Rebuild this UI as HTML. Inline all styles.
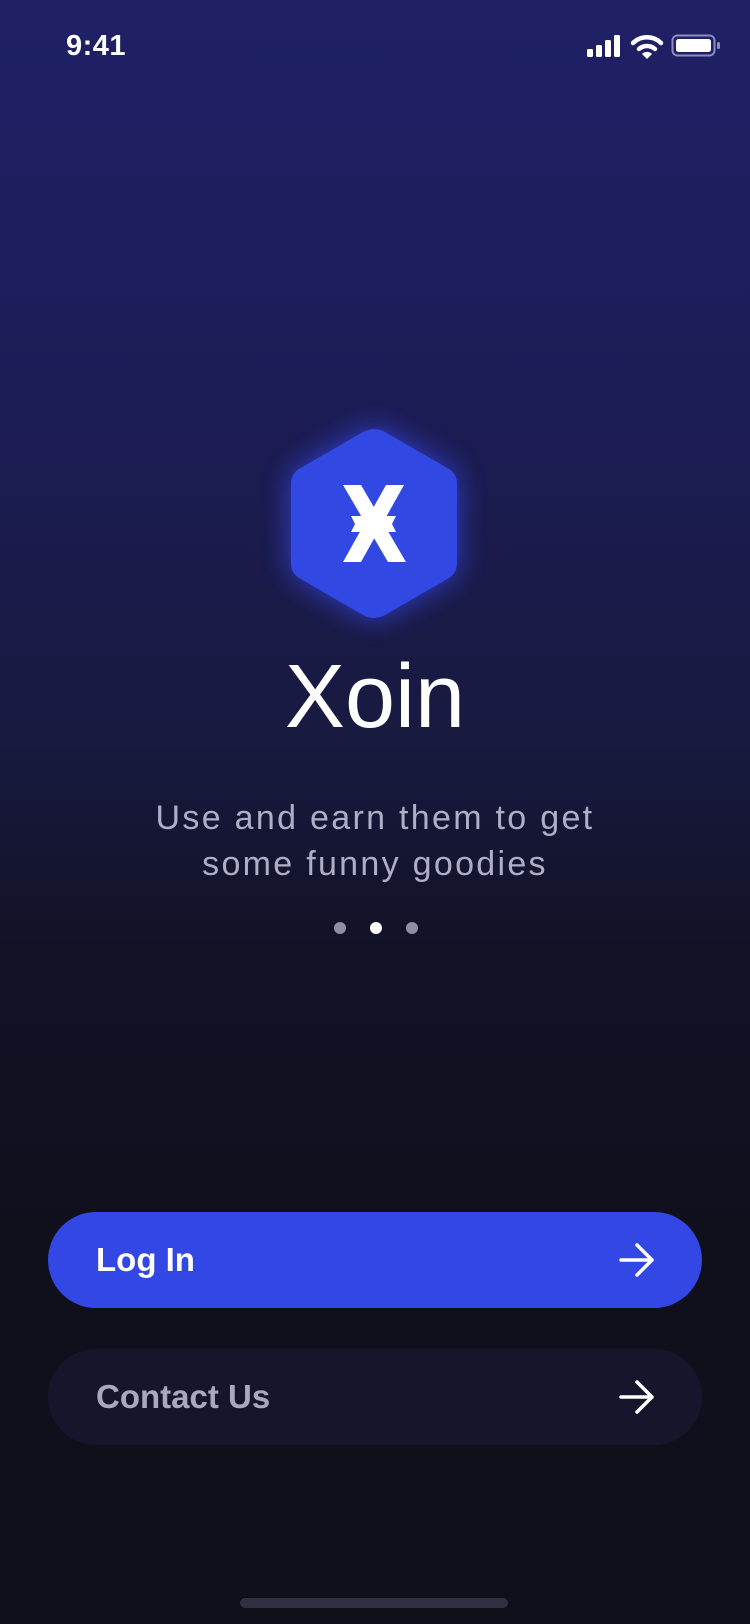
<!DOCTYPE html>
<html><head><meta charset="utf-8"><style>
*{margin:0;padding:0;box-sizing:border-box}
body{width:750px;height:1624px;overflow:hidden;font-family:"Liberation Sans",sans-serif;background:linear-gradient(180deg,#1f2066 0%,#1d1d5a 20%,#181a40 45%,#121227 58%,#10101d 75%,#0f0f1a 100%);position:relative;color:#fff}
.abs{position:absolute}
.time{left:66px;top:30px;font-size:29px;font-weight:600;letter-spacing:0.5px}
.btn{left:48px;width:654px;height:96px;border-radius:48px}
.btn span{position:absolute;left:48px;top:0;line-height:96px;font-size:33px;font-weight:700}
.btn svg{position:absolute;right:46px;top:30px}
</style></head><body>
<div class="abs time">9:41</div>
<svg class="abs" style="left:585px;top:34px" width="40" height="24"><rect x="2" y="15" width="6" height="8" rx="1.5" fill="#fff"/><rect x="11" y="11" width="6" height="12" rx="1.5" fill="#fff"/><rect x="20" y="6" width="6" height="17" rx="1.5" fill="#fff"/><rect x="29" y="1" width="6" height="22" rx="1.5" fill="#fff"/></svg>
<svg class="abs" style="left:630px;top:33px" width="34" height="26"><path d="M3 10 A20 20 0 0 1 31 10" stroke="#fff" stroke-width="4.5" fill="none" stroke-linecap="round"/><path d="M9 16 A12 12 0 0 1 25 16" stroke="#fff" stroke-width="4.5" fill="none" stroke-linecap="round"/><path d="M12 21 L17 26 L22 21 A7 7 0 0 0 12 21Z" fill="#fff"/></svg>
<svg class="abs" style="left:671px;top:34px" width="50" height="24"><rect x="1.5" y="1.5" width="42" height="20" rx="5" stroke="#8b8cc0" stroke-width="2" fill="none"/><rect x="5" y="5" width="35" height="13" rx="2.5" fill="#fff"/><rect x="46" y="8" width="3" height="7" rx="1.5" fill="#8b8cc0"/></svg>
<svg class="abs" style="left:251px;top:390px" width="246" height="267" viewBox="0 0 246 267">
<defs><filter id="g" x="-50%" y="-50%" width="200%" height="200%"><feGaussianBlur stdDeviation="14"/></filter></defs>
<path d="M112 42 Q123 36 134 42 L198 79 Q206 84 206 94 L206 173 Q206 183 198 188 L134 225 Q123 231 112 225 L48 188 Q40 183 40 173 L40 94 Q40 84 48 79Z" fill="#3a4cff" opacity="0.75" filter="url(#g)"/>
<path d="M112 42 Q123 36 134 42 L198 79 Q206 84 206 94 L206 173 Q206 183 198 188 L134 225 Q123 231 112 225 L48 188 Q40 183 40 173 L40 94 Q40 84 48 79Z" fill="#3148e2"/>
<polygon points="92,95 110,95 155,172 137,172" fill="#fff"/>
<polygon points="135,95 153,95 110,172 92,172" fill="#fff"/>
<polygon points="100,126 145,126 141,134 145,142 100,142 104,134" fill="#fff"/>
</svg>
<div class="abs" style="left:0;width:750px;top:646px;text-align:center;font-size:90px;font-weight:400;letter-spacing:0px">Xoin</div>
<div class="abs" style="left:0;width:750px;top:795px;text-align:center;font-size:34px;line-height:46px;color:#aeafc6;letter-spacing:2.3px">Use and earn them to get<br>some funny goodies</div>
<div class="abs" style="left:334px;top:922px;width:12px;height:12px;border-radius:6px;background:#8e8fa6"></div>
<div class="abs" style="left:370px;top:922px;width:12px;height:12px;border-radius:6px;background:#fff"></div>
<div class="abs" style="left:406px;top:922px;width:12px;height:12px;border-radius:6px;background:#8e8fa6"></div>
<div class="abs btn" style="top:1212px;background:#3247e4"><span>Log In</span><svg width="38" height="36" viewBox="0 0 38 36"><path d="M3 18 H34 M19 3 L34 18 L19 33" stroke="#fff" stroke-width="3.5" fill="none" stroke-linecap="round" stroke-linejoin="round"/></svg></div>
<div class="abs btn" style="top:1349px;background:#15162b"><span style="color:#a8a9bd">Contact Us</span><svg width="38" height="36" viewBox="0 0 38 36"><path d="M3 18 H34 M19 3 L34 18 L19 33" stroke="#fff" stroke-width="3.5" fill="none" stroke-linecap="round" stroke-linejoin="round"/></svg></div>
<div class="abs" style="left:240px;top:1598px;width:268px;height:10px;border-radius:5px;background:#2e2f42"></div>
</body></html>
